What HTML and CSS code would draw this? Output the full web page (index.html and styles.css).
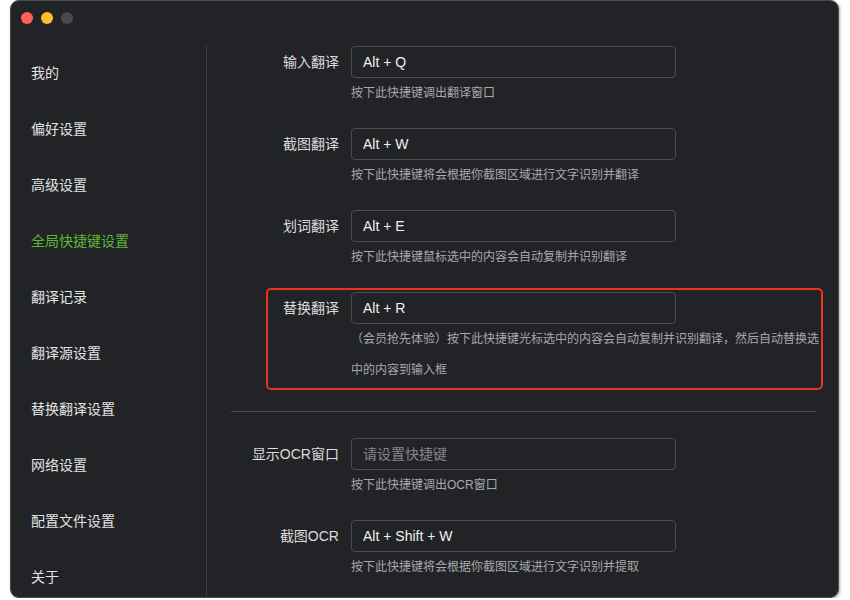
FILE: index.html
```html
<!DOCTYPE html>
<html lang="zh-CN">
  <head>
    <meta charset="UTF-8" />
    <meta name="viewport" content="width=device-width, initial-scale=1.0" />
    <title>全局快捷键设置</title>
    <link rel="stylesheet" href="styles.css">
  </head>
  <body>
    <div class="window">
      <div class="titlebar">
        <span class="light red"></span>
        <span class="light yellow"></span>
        <span class="light gray"></span>
      </div>
      <div class="main">
        <ul class="menu">
          <li>我的</li>
          <li>偏好设置</li>
          <li>高级设置</li>
          <li class="active">全局快捷键设置</li>
          <li>翻译记录</li>
          <li>翻译源设置</li>
          <li>替换翻译设置</li>
          <li>网络设置</li>
          <li>配置文件设置</li>
          <li>关于</li>
        </ul>

        <div class="content">
          <div class="row">
            <label class="label">输入翻译</label>
            <div class="field">
              <input class="key" type="text" value="Alt + Q" readonly />
              <div class="hint">按下此快捷键调出翻译窗口</div>
            </div>
          </div>

          <div class="row">
            <label class="label">截图翻译</label>
            <div class="field">
              <input class="key" type="text" value="Alt + W" readonly />
              <div class="hint">按下此快捷键将会根据你截图区域进行文字识别并翻译</div>
            </div>
          </div>

          <div class="row">
            <label class="label">划词翻译</label>
            <div class="field">
              <input class="key" type="text" value="Alt + E" readonly />
              <div class="hint">按下此快捷键鼠标选中的内容会自动复制并识别翻译</div>
            </div>
          </div>

          <div class="row marked">
            <label class="label">替换翻译</label>
            <div class="field">
              <input class="key" type="text" value="Alt + R" readonly />
              <div class="hint long">（会员抢先体验）按下此快捷键光标选中的内容会自动复制并识别翻译，然后自动替换选<br>中的内容到输入框</div>
            </div>
            <div class="highlight"></div>
          </div>

          <hr class="divider" />

          <div class="row">
            <label class="label">显示OCR窗口</label>
            <div class="field">
              <input class="key" type="text" placeholder="请设置快捷键" readonly />
              <div class="hint">按下此快捷键调出OCR窗口</div>
            </div>
          </div>

          <div class="row">
            <label class="label">截图OCR</label>
            <div class="field">
              <input class="key" type="text" value="Alt + Shift + W" readonly />
              <div class="hint">按下此快捷键将会根据你截图区域进行文字识别并提取</div>
            </div>
          </div>
        </div>
      </div>
    </div>
  </body>
</html>
```

FILE: styles.css
```css
body {
  margin: 0;
  background: #ffffff;
  font-family: "Liberation Sans", "Noto Sans CJK SC", sans-serif;
  overflow: hidden;
}
.window {
  margin-left: 10px;
  width: 829px;
  height: 598px;
  background: #222326;
  border: 1px solid #4a4b4e;
  border-radius: 9px;
  box-sizing: border-box;
  box-shadow: 1px 1px 3px rgba(0, 0, 0, 0.35);
  overflow: hidden;
  display: flex;
  flex-direction: column;
}
.titlebar {
  height: 44px;
  flex-shrink: 0;
  display: flex;
  gap: 8px;
  padding: 11px 0 0 10px;
  box-sizing: border-box;
}
.light {
  width: 12px;
  height: 12px;
  border-radius: 50%;
}
.red {
  background: #fe5f57;
}
.yellow {
  background: #febc2e;
}
.gray {
  background: #48494c;
}
.main {
  flex: 1;
  display: flex;
  min-width: 0;
}
.menu {
  list-style-type: none;
  margin: 0;
  padding: 0 0 0 20px;
  width: 175px;
  flex-shrink: 0;
  border-right: 1px solid #3d3e41;
}
.menu li {
  height: 56px;
  line-height: 56px;
  font-size: 14px;
  color: #e2e2e2;
}
.menu li.active {
  color: #5fb833;
}
.content {
  flex: 1;
  min-width: 0;
  padding: 1px 22px 0 24px;
}
.row {
  display: flex;
  position: relative;
  margin-bottom: 20px;
}
.label {
  width: 108px;
  padding-right: 12px;
  text-align: right;
  font-size: 14px;
  line-height: 32px;
  color: #dcdcdc;
  flex-shrink: 0;
}
.field {
  flex: 1;
  min-width: 0;
}
.key {
  display: block;
  width: 325px;
  height: 32px;
  box-sizing: border-box;
  margin: 0;
  padding: 0 11px;
  border: 1px solid #4b4c50;
  border-radius: 4px;
  background: #222326;
  color: #f0f0f0;
  font-family: inherit;
  font-size: 14px;
  outline: none;
}
.key::placeholder {
  color: #85868a;
}
.hint {
  font-size: 12px;
  line-height: 30px;
  color: #a8a9ad;
  white-space: nowrap;
}
.hint.long {
  line-height: 31px;
}
.marked {
  margin-bottom: 25px;
}
.highlight {
  position: absolute;
  top: -4px;
  bottom: -4px;
  left: 35px;
  right: -7px;
  border: 2px solid #ec321e;
  border-radius: 5px;
  pointer-events: none;
}
.divider {
  margin: 0 0 26px 0;
  border: 0;
  border-top: 1px solid #46474a;
}
```
